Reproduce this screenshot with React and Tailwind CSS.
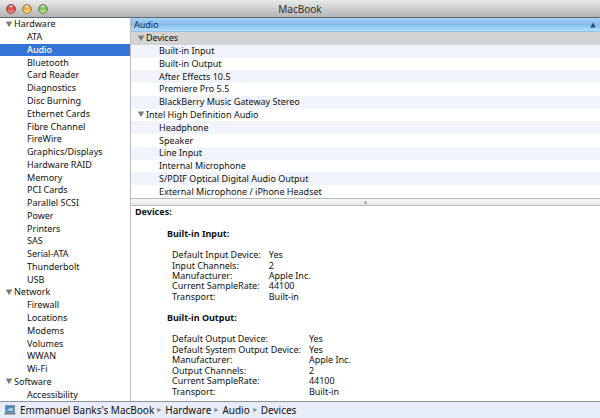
import { useState } from 'react';

const sections = [
  {
    name: 'Hardware',
    items: [
      'ATA', 'Audio', 'Bluetooth', 'Card Reader', 'Diagnostics', 'Disc Burning', 'Ethernet Cards',
      'Fibre Channel', 'FireWire', 'Graphics/Displays', 'Hardware RAID', 'Memory', 'PCI Cards',
      'Parallel SCSI', 'Power', 'Printers', 'SAS', 'Serial-ATA', 'Thunderbolt', 'USB',
    ],
  },
  { name: 'Network', items: ['Firewall', 'Locations', 'Modems', 'Volumes', 'WWAN', 'Wi-Fi'] },
  { name: 'Software', items: ['Accessibility'] },
];

const devices = [
  { name: 'Devices', group: true },
  { name: 'Built-in Input' },
  { name: 'Built-in Output' },
  { name: 'After Effects 10.5' },
  { name: 'Premiere Pro 5.5' },
  { name: 'BlackBerry Music Gateway Stereo' },
  { name: 'Intel High Definition Audio', group: true },
  { name: 'Headphone' },
  { name: 'Speaker' },
  { name: 'Line Input' },
  { name: 'Internal Microphone' },
  { name: 'S/PDIF Optical Digital Audio Output' },
  { name: 'External Microphone / iPhone Headset' },
];

const inputRows = [
  ['Default Input Device:', 'Yes'],
  ['Input Channels:', '2'],
  ['Manufacturer:', 'Apple Inc.'],
  ['Current SampleRate:', '44100'],
  ['Transport:', 'Built-in'],
];

const outputRows = [
  ['Default Output Device:', 'Yes'],
  ['Default System Output Device:', 'Yes'],
  ['Manufacturer:', 'Apple Inc.'],
  ['Output Channels:', '2'],
  ['Current SampleRate:', '44100'],
  ['Transport:', 'Built-in'],
];

const lights = [
  { label: 'Close', rim: '#8f2f2c', top: '#b8504c', mid: '#e0504b', low: '#f7b3a8' },
  { label: 'Minimize', rim: '#97702a', top: '#c79a4c', mid: '#efb54c', low: '#fbe9a0' },
  { label: 'Zoom', rim: '#4c7a35', top: '#7aa95f', mid: '#86c75f', low: '#d3f2a8' },
];

function Light({ light }) {
  const id = 'light-' + light.label;
  return (
    <button aria-label={light.label} className="block">
      <svg width="10" height="10" viewBox="0 0 10 10">
        <defs>
          <linearGradient id={id} x1="0" y1="0" x2="0" y2="1">
            <stop offset="0" stopColor={light.top} />
            <stop offset="0.5" stopColor={light.mid} />
            <stop offset="1" stopColor={light.low} />
          </linearGradient>
        </defs>
        <circle cx="5" cy="5" r="4.4" fill={`url(#${id})`} stroke={light.rim} strokeWidth="0.9" />
        <ellipse cx="5" cy="2.4" rx="2" ry="1.1" fill="#fff" opacity="0.65" />
      </svg>
    </button>
  );
}

function Triangle() {
  return (
    <svg width="8" height="7" viewBox="0 0 8 7" className="shrink-0">
      <path d="M0.8 0.5h6.4L4 6.3z" fill="#7c7c7c" />
    </svg>
  );
}

function Crumb({ children, last }) {
  return (
    <li className="flex items-center">
      <a href="#" className="whitespace-nowrap">{children}</a>
      {!last && (
        <svg width="5" height="6" viewBox="0 0 5 6" className="mx-[3px]">
          <path d="M0.3 0.8L4.4 3L0.3 5.2z" fill="#858b96" />
        </svg>
      )}
    </li>
  );
}

function DetailTable({ rows, className }) {
  return (
    <table className={`mt-[11px] ml-[37px] border-collapse ${className}`}>
      <tbody>
        {rows.map(([label, value]) => (
          <tr key={label}>
            <th scope="row" className="p-0 pr-2 text-left align-middle font-normal whitespace-nowrap">{label}</th>
            <td className="p-0 align-middle whitespace-nowrap">{value}</td>
          </tr>
        ))}
      </tbody>
    </table>
  );
}

function App() {
  const [selected, setSelected] = useState('Audio');

  return (
    <div className="flex h-screen flex-col overflow-hidden bg-white font-['Noto_Sans','DejaVu_Sans',sans-serif] text-[9px] leading-[10px] text-[#111]">
      <header className="grid h-[18px] shrink-0 grid-cols-[1fr_auto_1fr] items-center border-b border-[#5f6974] bg-linear-to-b from-[#eaeaea] to-[#b4b4b4] px-1.5">
        <div className="flex gap-1.5">
          {lights.map((light) => (
            <Light key={light.label} light={light} />
          ))}
        </div>
        <h1 className="text-[10px] leading-3 text-[#303030]">MacBook</h1>
      </header>

      <div className="flex min-h-0 flex-1">
        <nav className="grid w-[131px] shrink-0 auto-rows-fr border-r border-[#bdbdbd]">
          {sections.map((section) => [
            <button key={section.name} className="flex items-center gap-px pl-[5px] text-left">
              <Triangle />
              {section.name}
            </button>,
            ...section.items.map((item) => (
              <button
                key={item}
                onClick={() => setSelected(item)}
                className={`flex items-center pl-[27px] text-left ${item === selected ? 'bg-[#3673d6] font-medium text-white' : ''}`}
              >
                {item}
              </button>
            )),
          ])}
        </nav>

        <main className="flex min-w-0 flex-1 flex-col">
          <button className="flex h-[14px] shrink-0 items-center justify-between border-b border-[#8fc4ee] bg-linear-to-b from-[#a9d3f7] via-[#84bbec] to-[#b4e0fd] pr-1 pl-[3px] text-[#14304f]">
            Audio
            <svg width="6" height="6" viewBox="0 0 6 6">
              <path d="M3 0.5L5.8 5.5H0.2z" fill="#244a78" />
            </svg>
          </button>
          <div className="grid h-[166px] shrink-0 auto-rows-fr">
            {devices.map((device, i) => (
              <button
                key={device.name}
                className={`flex items-center text-left ${i === 0 ? 'bg-[#d4d4d4]' : i % 2 ? 'bg-[#f1f5fb]' : 'bg-white'} ${device.group ? 'gap-px pl-1.5' : 'pl-7'}`}
              >
                {device.group && <Triangle />}
                {device.name}
              </button>
            ))}
          </div>
          <div className="flex h-2 shrink-0 items-center justify-center border-y border-[#bababa] bg-linear-to-b from-[#fafafa] to-[#e6e6e6]">
            <span className="size-[3px] rounded-full bg-[#a8a8a8]" />
          </div>

          <section className="pl-1">
            <h2 className="leading-[11px] font-bold">Devices:</h2>
            <h3 className="mt-[11px] ml-8 leading-[11px] font-bold">Built-in Input:</h3>
            <DetailTable rows={inputRows} className="h-[52px]" />
            <h3 className="mt-2.5 ml-8 leading-[11px] font-bold">Built-in Output:</h3>
            <DetailTable rows={outputRows} className="h-[63px]" />
          </section>
        </main>
      </div>

      <footer className="flex h-[17px] shrink-0 items-center gap-1 border-t border-[#8c919a] bg-[#e6ecf8] pl-1 text-[10px] leading-3">
        <svg width="12" height="10" viewBox="0 0 12 10">
          <rect x="1.5" y="0.5" width="9" height="7" fill="#4a86bd" stroke="#8796a6" />
          <path d="M3 5.5Q5 2 9 3V6H3z" fill="#9ccbea" />
          <path d="M0 8h12l-1 1.5H1z" fill="#6b7a8c" />
        </svg>
        <ol className="flex items-center">
          <Crumb>Emmanuel Banks's MacBook</Crumb>
          <Crumb>Hardware</Crumb>
          <Crumb>Audio</Crumb>
          <Crumb last>Devices</Crumb>
        </ol>
      </footer>
    </div>
  );
}

export default App;
